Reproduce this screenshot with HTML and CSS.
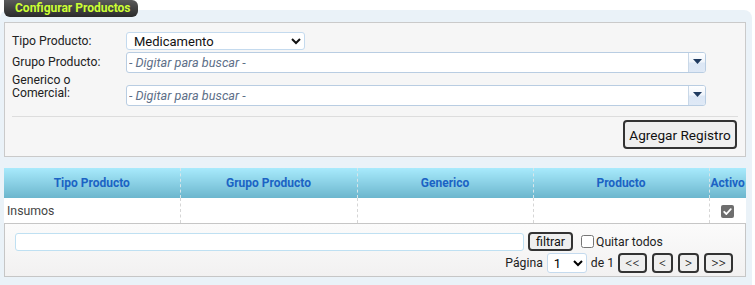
FILE: index.html
```html
<!DOCTYPE html>
<html lang="es">
<head>
<meta charset="utf-8">
<title>Configurar Productos</title>
<link rel="stylesheet" href="styles.css">
</head>
<body>
<div class="title">Configurar Productos</div>
<div class="frame">
  <div class="panel">
    <div class="form">
      <label class="lbl">Tipo Producto:</label>
      <select class="sel"><option>Medicamento</option></select>
      <label class="lbl">Grupo Producto:</label>
      <div class="combo">
        <input class="combo-input" placeholder="- Digitar para buscar -">
        <span class="combo-btn"><svg width="9" height="5" viewBox="0 0 9 5"><path d="M0 0H9L4.5 5Z" fill="#1f3a60"/></svg></span>
      </div>
      <label class="lbl lbl-top">Generico o<br>Comercial:</label>
      <div class="combo combo-end">
        <input class="combo-input" placeholder="- Digitar para buscar -">
        <span class="combo-btn"><svg width="9" height="5" viewBox="0 0 9 5"><path d="M0 0H9L4.5 5Z" fill="#1f3a60"/></svg></span>
      </div>
    </div>
    <div class="sep"></div>
    <div class="actions"><button class="btn btn-lg">Agregar Registro</button></div>
  </div>

  <table class="grid">
    <thead>
      <tr>
        <th class="c1">Tipo Producto</th>
        <th class="c2">Grupo Producto</th>
        <th class="c3">Generico</th>
        <th class="c4">Producto</th>
        <th class="c5">Activo</th>
      </tr>
    </thead>
    <tbody>
      <tr>
        <td>Insumos</td>
        <td></td>
        <td></td>
        <td></td>
        <td class="center"><span class="chk"><svg width="13" height="13" viewBox="0 0 13 13"><path d="M3.2 6.8L5.4 9L9.8 4.2" fill="none" stroke="#fff" stroke-width="1.8" stroke-linecap="round" stroke-linejoin="round"/></svg></span></td>
      </tr>
    </tbody>
  </table>

  <div class="footer">
    <div class="frow">
      <input class="filter-input" type="text">
      <button class="btn btn-sm btn-filtrar">filtrar</button>
      <label class="quitar"><input type="checkbox" class="cb">Quitar todos</label>
    </div>
    <div class="frow frow-right">
      <span class="ftxt">Página</span>
      <select class="pg-sel"><option>1</option></select>
      <span class="ftxt">de 1</span>
      <button class="btn btn-sm btn-pg btn-wide">&lt;&lt;</button>
      <button class="btn btn-sm btn-pg btn-nar">&lt;</button>
      <button class="btn btn-sm btn-pg btn-nar">&gt;</button>
      <button class="btn btn-sm btn-pg btn-wide">&gt;&gt;</button>
    </div>
  </div>
</div>
</body>
</html>
```

FILE: styles.css
```css
* { box-sizing: border-box; }
html, body { margin: 0; padding: 0; background: #fff; }
body {
  font-family: Roboto, "Liberation Sans", Arial, sans-serif;
  font-size: 12px;
  color: #222;
  width: 755px;
  height: 285px;
  overflow: hidden;
}

.title {
  position: relative;
  z-index: 1;
  display: inline-block;
  margin-left: 4px;
  height: 17px;
  width: 134px;
  padding-left: 11px;
  line-height: 17px;
  white-space: nowrap;
  font-family: Roboto, "Liberation Sans", Arial, sans-serif;
  font-weight: bold;
  font-size: 12px;
  color: #ccff33;
  background: linear-gradient(#5a5a5a, #2b2b2b);
  border-radius: 0 6px 6px 6px;
  vertical-align: top;
}

.frame {
  margin-top: -7px;
  width: 752px;
  height: 282px;
  background: #eaf2f8;
  border-radius: 8px 8px 4px 4px;
  padding: 12px 6px 5px 4px;
}

.panel {
  background: #f6f6f6;
  border: 1px solid #cacaca;
  padding: 9px 7px 7px 7px;
}

.form {
  display: grid;
  grid-template-columns: 114px 580px;
  grid-template-rows: 19px 21px 32px;
  row-gap: 1px;
  align-items: center;
}
.lbl { font-size: 12.2px; color: #222; line-height: 13px; }
.lbl-top { align-self: start; }

.sel {
  align-self: start;
  width: 179px;
  height: 18px;
  font-family: Roboto, "Liberation Sans", Arial, sans-serif;
  font-size: 13px;
  color: #111;
  border: 1px solid #c4daee;
  border-radius: 3px;
  background: #fff;
  padding: 0 0 0 3px;
}

.combo {
  display: flex;
  height: 21px;
  border: 1px solid #b9cde2;
  border-radius: 3px;
  background: #fff;
  overflow: hidden;
}
.combo-end { align-self: end; }
.combo-input {
  flex: 1;
  border: 0;
  outline: 0;
  padding: 0 0 0 2px;
  font-family: Roboto, "Liberation Sans", Arial, sans-serif;
  font-size: 12.7px;
  background: transparent;
}
.combo-input::placeholder { color: #5d6f88; font-style: italic; }
.combo-btn {
  width: 17px;
  border-left: 1px solid #c9d8e8;
  background: linear-gradient(#ffffff 0%, #f0f5fb 45%, #dce7f5 55%, #dfe9f6 100%);
  display: flex;
  align-items: center;
  justify-content: center;
  padding-bottom: 2px;
}

.sep {
  margin-top: 10px;
  height: 1px;
  background: #dddddd;
}
.actions {
  display: flex;
  justify-content: flex-end;
  margin-top: 3px;
  padding-right: 1px;
}

.btn {
  font-family: Roboto, "Liberation Sans", Arial, sans-serif;
  color: #111;
  background: #efefef;
  border: 2px solid #333;
  border-radius: 4px;
  padding: 0;
  cursor: pointer;
}
.btn-lg { height: 29px; width: 114px; font-size: 13.6px; }
.btn-sm { height: 20px; font-size: 13px; line-height: 13px; }
.btn-pg { font-size: 14px; line-height: 14px; font-weight: 300; }
.btn-filtrar { width: 45px; height: 19px; font-size: 12.5px; }
.btn-wide { width: 29px; }
.btn-nar { width: 21px; }

.grid {
  margin-top: 11px;
  width: 742px;
  border-collapse: collapse;
  table-layout: fixed;
  background: #fff;
}
.grid th {
  height: 30px;
  padding: 0;
  font-size: 12px;
  font-weight: bold;
  color: #1b63c4;
  background: linear-gradient(#a8eafc, #6cb6cd);
  border-left: 1px dashed #d8e6ea;
  text-align: center;
}
.grid th:first-child, .grid td:first-child { border-left: 0; }
.grid th.c5 { text-align: left; padding-left: 1px; }
.c1 { width: 176px; }
.c2 { width: 177px; }
.c3 { width: 176px; }
.c4 { width: 176px; }
.c5 { width: 37px; }
.grid td {
  height: 25px;
  padding: 0 0 0 3px;
  font-size: 12.3px;
  color: #444;
  border-left: 1px dashed #d6d6d6;
}
.grid td.center { text-align: center; padding: 0; }
.chk {
  display: inline-block;
  width: 13px;
  height: 13px;
  border-radius: 2px;
  background: #6e6e6e;
  vertical-align: middle;
  line-height: 0;
}

.footer {
  height: 54px;
  border: 1px solid #c6c6c6;
  background: linear-gradient(#fbfbfb, #f2f1f1);
  padding: 8px 12px 3px 10px;
  display: flex;
  flex-direction: column;
  gap: 2px;
}
.frow {
  display: flex;
  align-items: center;
  height: 19px;
}
.frow-right { justify-content: flex-end; height: 20px; }
.filter-input {
  width: 509px;
  height: 18px;
  border: 1px solid #bfe0f2;
  border-radius: 3px;
  background: #fff;
  margin: 0 4px 0 0;
  outline: 0;
}
.quitar {
  display: flex;
  align-items: center;
  margin-left: 8px;
  font-size: 12.2px;
  color: #222;
}
.cb { margin: 0 2px 0 0; width: 13px; height: 13px; }
.ftxt { font-size: 12.2px; color: #222; }
.pg-sel {
  width: 40px;
  height: 20px;
  margin: 0 4px;
  font-family: Roboto, "Liberation Sans", Arial, sans-serif;
  font-size: 13px;
  border: 1px solid #c4daee;
  border-radius: 3px;
  background: #fff;
  padding: 0 0 0 2px;
}
.frow-right .btn { margin-left: 5px; }
.frow-right .btn:first-of-type { margin-left: 4px; }
```
